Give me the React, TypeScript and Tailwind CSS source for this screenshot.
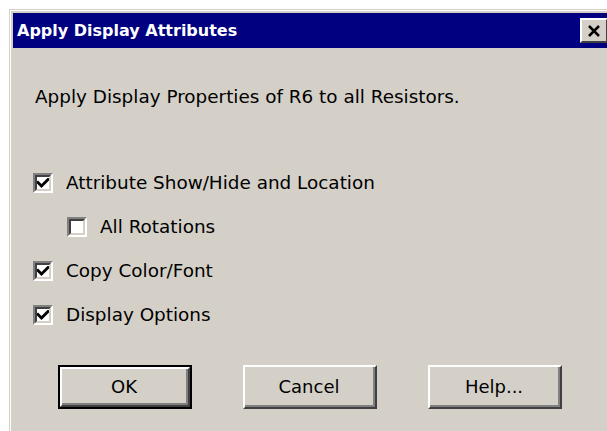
import React from 'react';

const face = 'font-["DejaVu_Sans",sans-serif]';

function CheckBox({ checked }: { checked: boolean }) {
  return (
    <div className="w-[20px] h-[20px] shrink-0 border-t-2 border-l-2 border-t-[#808080] border-l-[#808080] border-b-2 border-r-2 border-b-white border-r-white">
      <div className="w-full h-full bg-white border-t-2 border-l-2 border-t-[#404040] border-l-[#404040] border-b-2 border-r-2 border-b-[#d4d0c8] border-r-[#d4d0c8] flex items-center justify-center">
        {checked && (
          <svg width="12" height="11" viewBox="0 0 12 11">
            <path d="M1 4.5 L4.5 8 L11 1.5" stroke="#000" strokeWidth="2.8" fill="none" strokeLinecap="square" />
          </svg>
        )}
      </div>
    </div>
  );
}

function Option({ label, checked, indent }: { label: string; checked: boolean; indent?: boolean }) {
  return (
    <div className={`flex items-center h-[44px] gap-[13px] ${indent ? 'pl-[34px]' : ''}`}>
      <CheckBox checked={checked} />
      <span className="text-[18.4px] text-black">{label}</span>
    </div>
  );
}

function Button({ label, isDefault }: { label: string; isDefault?: boolean }) {
  return (
    <div className={`w-[134px] h-[44px] ${isDefault ? 'border-2 border-black' : ''}`}>
      <div className="w-full h-full border-t-2 border-l-2 border-t-white border-l-white border-b-2 border-r-2 border-b-[#404040] border-r-[#404040]">
        <div className="w-full h-full border-b-2 border-r-2 border-b-[#808080] border-r-[#808080] flex items-center justify-center text-[18px] text-black">
          {label}
        </div>
      </div>
    </div>
  );
}

export default function App() {
  return (
    <div className={`w-[607px] h-[431px] overflow-hidden bg-white pt-[9px] pl-[9px] ${face}`}>
      <div className="w-[605px] h-[440px] bg-[#d4d0c8] p-[4px] shadow-[inset_1px_1px_0_#d4d0c8,inset_2px_2px_0_#ffffff]">
        <div className="h-[35px] bg-[#000080] flex items-center justify-between pl-[4px] pr-[2px]">
          <span className="text-white font-bold text-[16px]">Apply Display Attributes</span>
          <div className="w-[28px] h-[25px] bg-[#d4d0c8] border-t-2 border-l-2 border-t-white border-l-white border-b-2 border-r-2 border-b-[#404040] border-r-[#404040] flex items-center justify-center">
            <svg width="14" height="12" viewBox="0 0 14 12">
              <path d="M2 1 L12 11 M12 1 L2 11" stroke="#000" strokeWidth="2.5" fill="none" />
            </svg>
          </div>
        </div>
        <div className="pl-[22px] pt-[37px] text-black">
          <p className="text-[18.4px] leading-[24px]">Apply Display Properties of R6 to all Resistors.</p>
          <div className="mt-[52px] -ml-[2px] flex flex-col">
            <Option label="Attribute Show/Hide and Location" checked />
            <Option label="All Rotations" checked={false} indent />
            <Option label="Copy Color/Font" checked />
            <Option label="Display Options" checked />
          </div>
          <div className="mt-[28px] pl-[23px] flex gap-[51px]">
            <Button label="OK" isDefault />
            <Button label="Cancel" />
            <Button label="Help..." />
          </div>
        </div>
      </div>
    </div>
  );
}
